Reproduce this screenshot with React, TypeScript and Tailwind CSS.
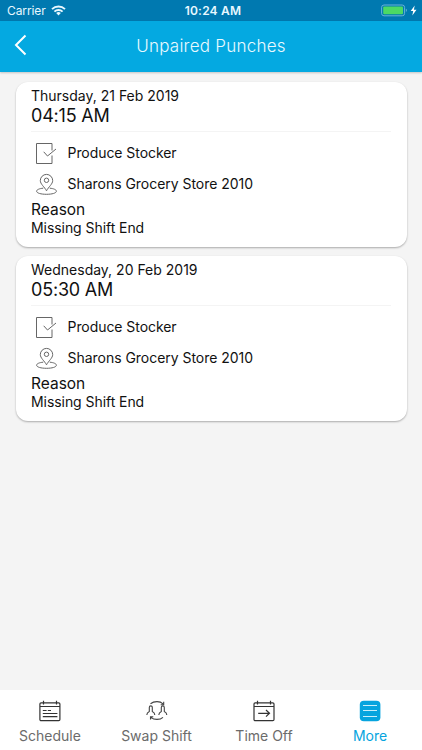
import React from 'react'

interface Punch {
  date: string
  time: string
  job: string
  location: string
  reason: string
}

const punches: Punch[] = [
  {
    date: 'Thursday, 21 Feb 2019',
    time: '04:15 AM',
    job: 'Produce Stocker',
    location: 'Sharons Grocery Store 2010',
    reason: 'Missing Shift End'
  },
  {
    date: 'Wednesday, 20 Feb 2019',
    time: '05:30 AM',
    job: 'Produce Stocker',
    location: 'Sharons Grocery Store 2010',
    reason: 'Missing Shift End'
  }
]

const WifiIcon = () => (
  <svg width="15" height="11" viewBox="0 0 15 11" fill="none" stroke="#e8f8ff" strokeWidth="1.9">
    <path d="M1 4.1a9.3 9.3 0 0 1 13 0" />
    <path d="M3.4 6.6a5.9 5.9 0 0 1 8.2 0" />
    <path d="M7.5 10.4 5.2 8.1a3.3 3.3 0 0 1 4.6 0Z" fill="#e8f8ff" stroke="none" />
  </svg>
)

const BatteryIcon = () => (
  <svg width="37" height="13" viewBox="0 0 37 13" fill="none">
    <rect x="0.6" y="1" width="23" height="10.8" rx="2.4" stroke="#68b3d6" />
    <rect x="2.2" y="2.6" width="19.8" height="7.6" rx="1" fill="#4cd964" />
    <path d="M24.9 4.8c1.3.4 1.3 2.8 0 3.2Z" fill="#68b3d6" />
    <path d="M33.7 1.6 29.7 7h2.5l-.9 4.4 4.2-5.6h-2.6Z" fill="#fff" />
  </svg>
)

const JobIcon = () => (
  <svg width="22" height="22" viewBox="0 0 22 22" fill="none" stroke="#666" strokeWidth="1">
    <path d="M17 8.5V1.5H1.500v20H17v-8" />
    <path d="M8.700 9.800 12.500 14l8.500-7" />
  </svg>
)

const LocationIcon = () => (
  <svg width="22" height="22" viewBox="0 0 22 22" fill="none" stroke="#666" strokeWidth="1">
    <path d="M11.500 17.800C9.500 14 5.300 11 5.300 7.600a6.200 6.200 0 0 1 12.400 0c0 3.400-4.200 6.400-6.200 10.200Z" />
    <circle cx="11.500" cy="7.300" r="2.200" />
    <path d="M8.200 15.200C4.400 15.500 1.600 16.700 1.600 18.200c0 1.900 4.400 3.100 9.900 3.100s9.900-1.200 9.900-3.100c0-1.500-2.800-2.700-6.600-3" />
  </svg>
)

const ScheduleIcon = () => (
  <svg width="22" height="22" viewBox="0 0 22 22" fill="none" stroke="#333" strokeWidth="1.2">
    <rect x="0.9" y="2.8" width="20" height="17.8" rx="1.2" />
    <path d="M1 6.5h20M4.500.8v3.600M17.500.8v3.600M3.800 10.500h3.800M8.800 10.500h3.200M3.800 13.500h14.600M3.800 16.600h14.600" />
  </svg>
)

const SwapIcon = () => (
  <svg width="22" height="22" viewBox="0 0 22 22" fill="none" stroke="#444" strokeWidth="1.1">
    <path d="M4.500 3.800C8 1 14 .9 17 3.800M17.700 1.700v3h-3" />
    <path d="M17 17.300c-3 2.700-9 2.700-12 0M4.500 19.500v-2.800h2.800" />
    <path d="M.8 15c0-2 .8-2.800 2.500-3.600V7.500c0-2.200 3-2.200 3 0v3.900C8 12.200 8.800 13 8.800 15" />
    <path d="M12.800 15c0-2 .8-2.800 2.500-3.600V7.500c0-2.200 3-2.200 3 0v3.900c1.700.8 2.500 1.600 2.500 3.600" />
  </svg>
)

const TimeOffIcon = () => (
  <svg width="22" height="22" viewBox="0 0 22 22" fill="none" stroke="#333" strokeWidth="1.2">
    <rect x="1" y="2.8" width="20" height="17.8" rx="1.2" />
    <path d="M1 6.500h20M4.500.8v3.600M17.500.8v3.600M5.200 13.300h11M13 10l3.500 3.300-3.500 3.300" />
  </svg>
)

const MoreIcon = () => (
  <svg width="22" height="22" viewBox="0 0 22 22" fill="none">
    <rect x="0.8" y="0.8" width="20.6" height="20.4" rx="4" fill="#06a4de" />
    <path d="M4 5.500h14M4 10.500h14M4 16.500h14" stroke="#c9effb" strokeWidth="1" />
  </svg>
)

const tabs = [
  { label: 'Schedule', icon: <ScheduleIcon />, active: false },
  { label: 'Swap Shift', icon: <SwapIcon />, active: false },
  { label: 'Time Off', icon: <TimeOffIcon />, active: false },
  { label: 'More', icon: <MoreIcon />, active: true }
]

const PunchCard: React.FC<{ punch: Punch }> = ({ punch }) => (
  <div className="h-[165px] rounded-xl bg-white px-[15.5px] pt-1 text-[14px] shadow-[0_1px_2px_rgba(0,0,0,0.3)]">
    <p className="h-5 leading-5">{punch.date}</p>
    <p className="h-[19px] text-[18px] leading-[19px] tracking-[-0.2px]">{punch.time}</p>
    <div className="mt-[6px] h-px bg-[#f4f4f4]" />
    <div className="mt-[5px] flex h-[31px] items-center pl-1">
      <JobIcon />
      <span className="ml-[10.5px] leading-5 tracking-[-0.06px]">{punch.job}</span>
    </div>
    <div className="flex h-[31px] items-center pl-1">
      <LocationIcon />
      <span className="ml-[10.5px] leading-5 tracking-[-0.03px]">{punch.location}</span>
    </div>
    <p className="mt-px h-[19px] text-[15.5px] leading-5">Reason</p>
    <p className="h-[18px] leading-[18px] tracking-[-0.06px]">{punch.reason}</p>
  </div>
)

const App: React.FC = () => {
  return (
    <div
      className="flex h-[750px] w-[422px] flex-col overflow-hidden bg-[#f4f4f4] text-[#111]"
      style={{ fontFamily: 'Inter, "Liberation Sans", sans-serif' }}
    >
      <div className="grid h-[21px] shrink-0 grid-cols-3 items-center bg-[#0079b0] text-[12px] text-[#e8f8ff]">
        <div className="flex items-center gap-[5px] pl-[7px] tracking-[-0.1px]">
          <span>Carrier</span>
          <WifiIcon />
        </div>
        <span className="pl-1 text-center font-semibold tracking-[0.2px]">10:24 AM</span>
        <div className="flex justify-end pr-1">
          <BatteryIcon />
        </div>
      </div>

      <header className="grid h-[51px] shrink-0 grid-cols-[60px_1fr_60px] items-center bg-[#04a9e1] text-[#e8f9ff] shadow-[0_1px_2px_rgba(0,0,0,0.2)]">
        <svg className="mb-[3px] ml-[13px]" width="14" height="22" viewBox="0 0 14 22" fill="none" stroke="#fff" strokeWidth="2">
          <path d="M12.500 1.500 3 11l9.500 9.500" />
        </svg>
        <h1 className="text-center text-[17px] font-light tracking-[0.25px]">Unpaired Punches</h1>
      </header>

      <main className="flex flex-1 flex-col gap-[9px] px-[15.5px] pt-[10px]">
        {punches.map((punch) => (
          <PunchCard key={punch.date} punch={punch} />
        ))}
      </main>

      <nav className="grid h-[60px] shrink-0 grid-cols-[100px_113px_102px_110px] bg-white pt-[10px] text-[14px]">
        {tabs.map((tab) => (
          <div key={tab.label} className="flex flex-col items-center gap-1">
            {tab.icon}
            <span className={tab.active ? 'leading-5 text-[#06a4de]' : 'leading-5 text-[#6b6b6b]'}>
              {tab.label}
            </span>
          </div>
        ))}
      </nav>
    </div>
  )
}

export default App
